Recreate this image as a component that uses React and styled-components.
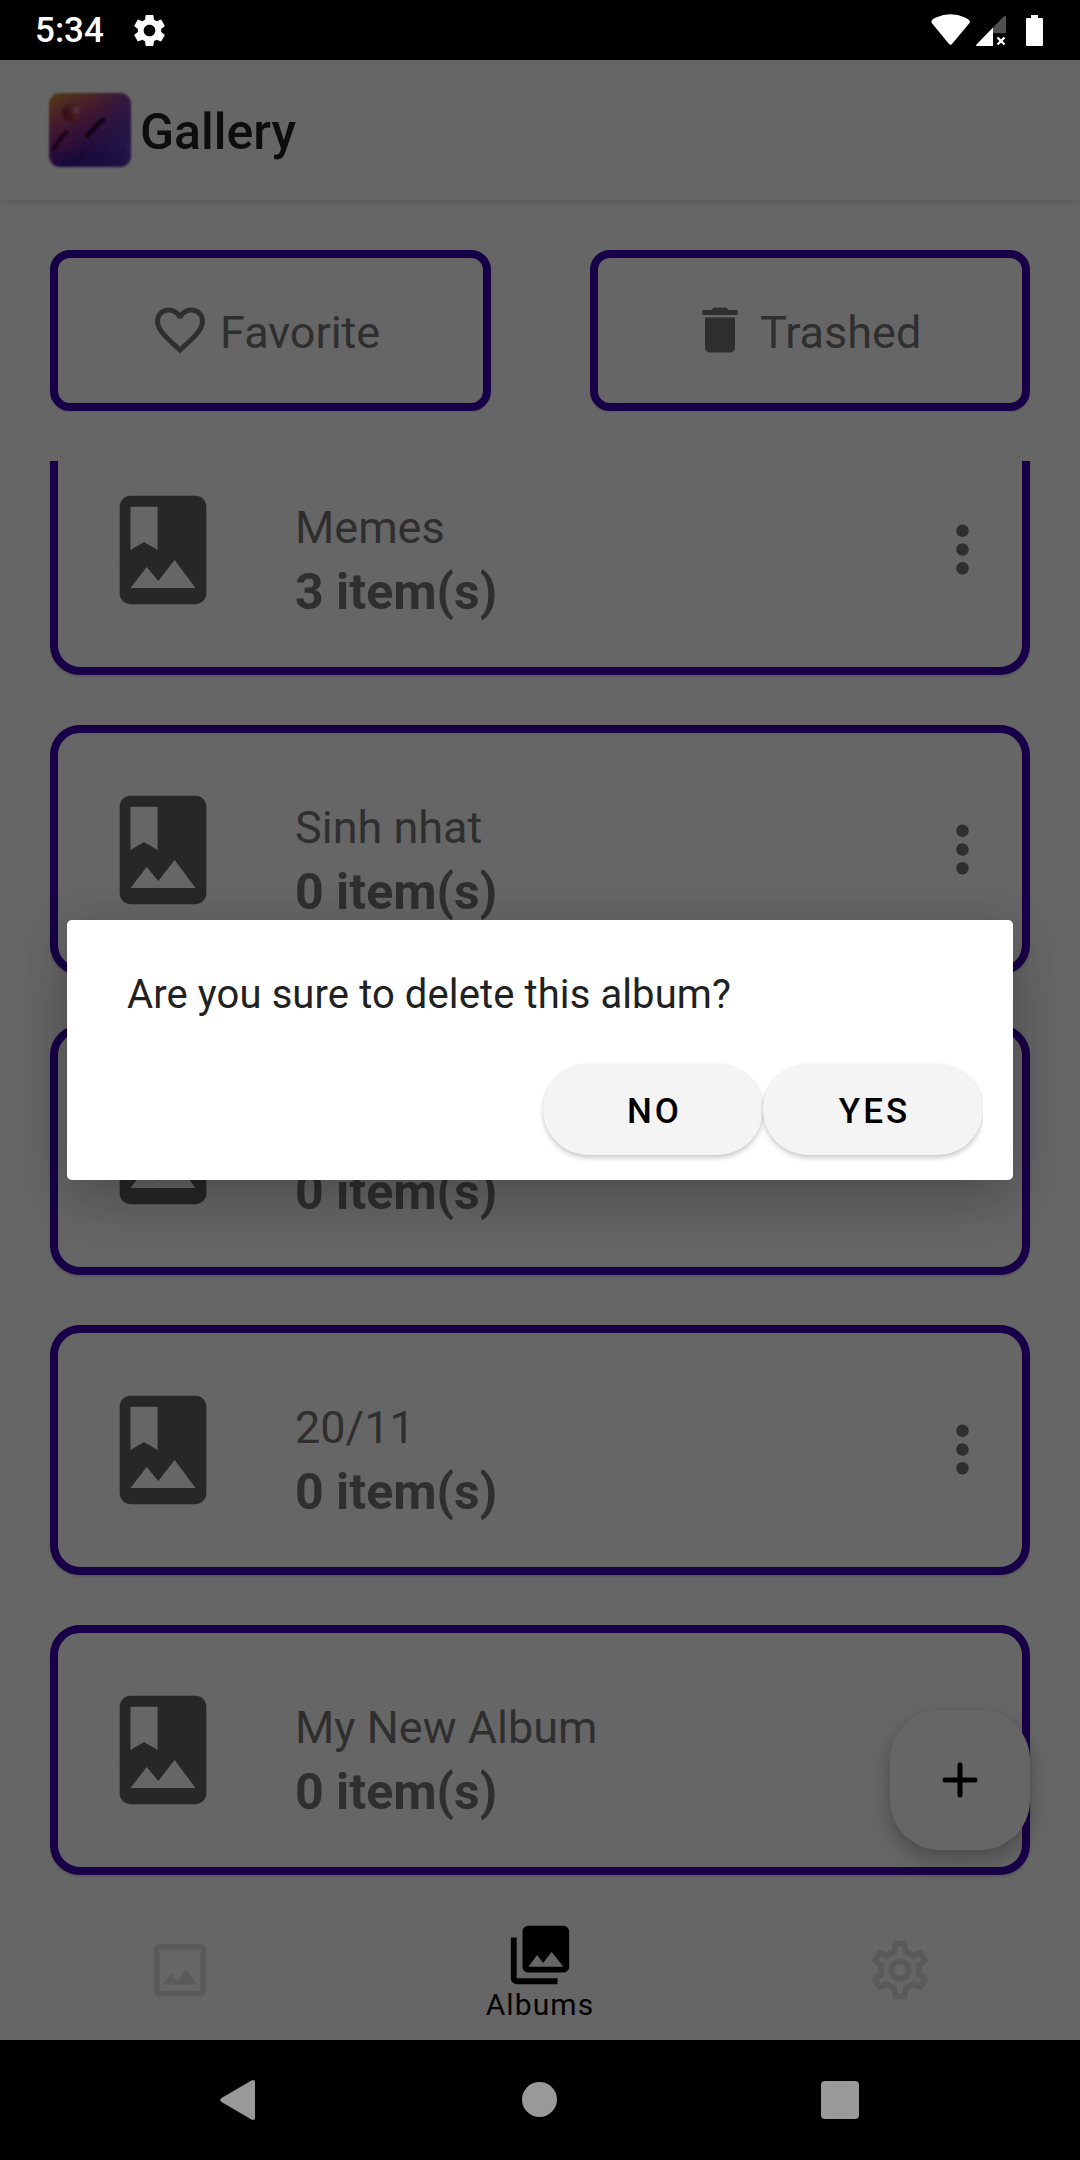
import React from "react";
import styled, { createGlobalStyle } from "styled-components";

const GlobalStyle = createGlobalStyle`
  * { box-sizing: border-box; }
  body { margin: 0; background: #000; font-family: Roboto, "Noto Sans", sans-serif; }
  svg { display: block; flex: none; }
`;

const Phone = styled.div`
  width: 1080px;
  height: 2160px;
  display: flex;
  flex-direction: column;
  background: #000;
  overflow: hidden;
`;

const StatusBar = styled.header`
  height: 60px;
  flex: none;
  display: flex;
  align-items: center;
  padding: 0 34px 0 35px;
  color: #fff;
`;

const Clock = styled.span`
  font-size: 35px;
  font-weight: 500;
  line-height: 58px;
  padding-top: 2px;
  width: 95px;
`;

const StatusIcons = styled.div`
  margin-left: auto;
  display: flex;
`;

const AppArea = styled.main`
  position: relative;
  height: 1980px;
  flex: none;
  display: flex;
  flex-direction: column;
  background: #fff;
`;

const AppBar = styled.div`
  height: 140px;
  flex: none;
  display: flex;
  align-items: center;
  padding: 0 45px;
  background: #fff;
  box-shadow: 0 2px 6px rgba(0, 0, 0, 0.14);
  z-index: 1;
`;

const Title = styled.h1`
  margin: 4px 0 0 5px;
  font-size: 50px;
  font-weight: 500;
  color: #212121;
`;

const Shortcuts = styled.div`
  flex: none;
  display: grid;
  grid-template-columns: 441px 440px;
  column-gap: 99px;
  padding: 50px 50px;
`;

const Shortcut = styled.button`
  height: 161px;
  display: flex;
  align-items: center;
  gap: 10px;
  padding: 0 0 0 92px;
  border: 8px solid #3d00b3;
  border-radius: 20px;
  background: #fff;
  color: #757575;
  font: 400 45px Roboto, sans-serif;
  box-shadow: 0 1px 2px rgba(0, 0, 0, 0.12);

  svg {
    margin-bottom: 1px;
  }
`;

const ShortcutLabel = styled.span`
  padding-top: 3px;
`;

const AlbumList = styled.div`
  flex: 1;
  min-height: 0;
  overflow: hidden;
  display: flex;
  flex-direction: column;
  justify-content: flex-end;
  gap: 50px;
  padding: 0 50px 25px;
`;

const AlbumCard = styled.article`
  height: 250px;
  flex: none;
  display: flex;
  align-items: center;
  padding: 0 22px 0 40px;
  border: 8px solid #3d00b3;
  border-radius: 30px;
  background: #fff;
  color: #757575;
  box-shadow: 0 2px 3px rgba(0, 0, 0, 0.14);
`;

const AlbumText = styled.div`
  flex: 1;
  padding: 22px 0 0 67px;
`;

const AlbumName = styled.div`
  height: 53px;
  font-size: 45px;
  line-height: 53px;
`;

const AlbumCount = styled.div`
  margin-top: 9px;
  font-size: 50px;
  line-height: 59px;
  font-weight: 700;
`;

const CardIcon = styled.span`
  color: #616161;
`;

const MenuIcon = styled.span`
  padding-bottom: 2px;
`;

const Fab = styled.button`
  position: absolute;
  right: 50px;
  bottom: 190px;
  width: 140px;
  height: 140px;
  display: grid;
  place-items: center;
  padding: 0;
  border: 0;
  border-radius: 50px;
  background: #fff;
  box-shadow: 0 10px 22px rgba(0, 0, 0, 0.26), 0 1px 8px rgba(0, 0, 0, 0.05);
`;

const TabBar = styled.nav`
  height: 140px;
  flex: none;
  display: grid;
  grid-template-columns: repeat(3, 1fr);
  background: #fff;
  box-shadow: 0 -1px 5px rgba(0, 0, 0, 0.04);
`;

const Tab = styled.div`
  display: flex;
  flex-direction: column;
  align-items: center;
  padding-top: ${(p) => (p.$active ? 20 : 35)}px;
  color: ${(p) => (p.$active ? "#000" : "#e0e0e0")};
`;

const TabLabel = styled.span`
  font-size: 30px;
  line-height: 36px;
  letter-spacing: 1.1px;
  margin-top: -3px;
`;

const Scrim = styled.div`
  position: absolute;
  inset: 0;
  z-index: 2;
  display: flex;
  flex-direction: column;
  align-items: center;
  padding-top: 860px;
  background: rgba(0, 0, 0, 0.6);
`;

const Dialog = styled.section`
  width: 946px;
  height: 260px;
  display: flex;
  flex-direction: column;
  justify-content: space-between;
  padding: 51px 30px 0 60px;
  border-radius: 5px;
  background: #fff;
  box-shadow: 0 22px 56px rgba(0, 0, 0, 0.2), 0 4px 50px rgba(0, 0, 0, 0.08);
`;

const Message = styled.p`
  margin: 0;
  font-size: 40px;
  line-height: 48px;
  letter-spacing: 0.1px;
  color: #212121;
`;

const Actions = styled.div`
  display: flex;
  justify-content: flex-end;
  padding: 10px 0 25px;
  overflow: hidden;
`;

const DialogButton = styled.button`
  width: 220px;
  height: 91px;
  padding: 3px 0 0 3px;
  border: 0;
  border-radius: 46px;
  background: #f4f4f4;
  color: #000;
  font: 500 35px Roboto, sans-serif;
  letter-spacing: 3.1px;
  box-shadow: 0 3px 5px rgba(0, 0, 0, 0.2), 0 0 2px rgba(0, 0, 0, 0.06);
`;

const SystemNav = styled.footer`
  height: 120px;
  flex: none;
  display: grid;
  grid-template-columns: repeat(3, 300px);
  justify-content: center;
  place-items: center;
  color: #999;
`;

const Icon = ({ size, d }) => (
  <svg width={size} height={size} viewBox="0 0 24 24" fill="currentColor">
    <path d={d} />
  </svg>
);

const paths = {
  settings:
    "M19.14 12.94c.04-.3.06-.61.06-.94 0-.32-.02-.64-.07-.94l2.03-1.58a.49.49 0 0 0 .12-.61l-1.92-3.32a.488.488 0 0 0-.59-.22l-2.39.96c-.5-.38-1.03-.7-1.62-.94l-.36-2.54a.484.484 0 0 0-.48-.41h-3.84c-.24 0-.43.17-.47.41l-.36 2.54c-.59.24-1.13.57-1.62.94l-2.39-.96c-.22-.08-.47 0-.59.22L2.74 8.87c-.12.21-.08.47.12.61l2.03 1.58c-.05.3-.09.63-.09.94s.02.64.07.94l-2.03 1.58a.49.49 0 0 0-.12.61l1.92 3.32c.12.22.37.29.59.22l2.39-.96c.5.38 1.03.7 1.62.94l.36 2.54c.05.24.24.41.48.41h3.84c.24 0 .44-.17.47-.41l.36-2.54c.59-.24 1.13-.56 1.62-.94l2.39.96c.22.08.47 0 .59-.22l1.92-3.32c.12-.22.07-.47-.12-.61l-2.01-1.58zM12 15.6c-1.98 0-3.6-1.62-3.6-3.6s1.62-3.6 3.6-3.6 3.6 1.62 3.6 3.6-1.62 3.6-3.6 3.6z",
  settingsOutline:
    "M19.43 12.98c.04-.32.07-.64.07-.98 0-.34-.03-.66-.07-.98l2.11-1.65c.19-.15.24-.42.12-.64l-2-3.46c-.09-.16-.26-.25-.44-.25-.06 0-.12.01-.17.03l-2.49 1c-.52-.4-1.08-.73-1.69-.98l-.38-2.65C14.46 2.18 14.25 2 14 2h-4c-.25 0-.46.18-.49.42l-.38 2.65c-.61.25-1.17.59-1.69.98l-2.49-1c-.06-.02-.12-.03-.18-.03-.17 0-.34.09-.43.25l-2 3.46c-.13.22-.07.49.12.64l2.11 1.65c-.04.32-.07.65-.07.98 0 .33.03.66.07.98l-2.11 1.65c-.19.15-.24.42-.12.64l2 3.46c.09.16.26.25.44.25.06 0 .12-.01.17-.03l2.49-1c.52.4 1.08.73 1.69.98l.38 2.65c.03.24.24.42.49.42h4c.25 0 .46-.18.49-.42l.38-2.65c.61-.25 1.17-.59 1.69-.98l2.49 1c.06.02.12.03.18.03.17 0 .34-.09.43-.25l2-3.46c.12-.22.07-.49-.12-.64l-2.11-1.65zm-1.98-1.71c.04.31.05.52.05.73 0 .21-.02.43-.05.73l-.14 1.13.89.7 1.08.84-.7 1.21-1.27-.51-1.04-.42-.9.68c-.43.32-.84.56-1.25.73l-1.06.43-.16 1.13-.2 1.35h-1.4l-.19-1.35-.16-1.13-1.06-.43c-.43-.18-.83-.41-1.23-.71l-.91-.7-1.06.43-1.27.51-.7-1.21 1.08-.84.89-.7-.14-1.13c-.03-.31-.05-.54-.05-.74s.02-.43.05-.73l.14-1.13-.89-.7-1.08-.84.7-1.21 1.27.51 1.04.42.9-.68c.43-.32.84-.56 1.25-.73l1.06-.43.16-1.13.2-1.35h1.39l.19 1.35.16 1.13 1.06.43c.43.18.83.41 1.23.71l.91.7 1.06-.43 1.27-.51.7 1.21-1.07.85-.89.7.14 1.13zM12 8c-2.21 0-4 1.79-4 4s1.79 4 4 4 4-1.79 4-4-1.79-4-4-4zm0 6c-1.1 0-2-.9-2-2s.9-2 2-2 2 .9 2 2-.9 2-2 2z",
  heart:
    "M16.5 3c-1.74 0-3.41.81-4.5 2.09C10.91 3.81 9.24 3 7.5 3 4.42 3 2 5.42 2 8.5c0 3.78 3.4 6.86 8.55 11.54L12 21.35l1.45-1.32C18.6 15.36 22 12.28 22 8.5 22 5.42 19.58 3 16.5 3zm-4.4 15.55l-.1.1-.1-.1C7.14 14.24 4 11.39 4 8.5 4 6.5 5.5 5 7.5 5c1.54 0 3.04.99 3.57 2.36h1.87C13.46 5.99 14.96 5 16.5 5c2 0 3.5 1.5 3.5 3.5 0 2.89-3.14 5.74-7.9 10.05z",
  trash:
    "M6 19c0 1.1.9 2 2 2h8c1.1 0 2-.9 2-2V7H6v12zM19 4h-3.5l-1-1h-5l-1 1H5v2h14V4z",
  album:
    "M18 2H6c-1.1 0-2 .9-2 2v16c0 1.1.9 2 2 2h12c1.1 0 2-.9 2-2V4c0-1.1-.9-2-2-2zM6 4h5v8l-2.5-1.5L6 12V4zm0 15l3-3.86 2.14 2.58 3-3.86L18 19H6z",
  more: "M12 8c1.1 0 2-.9 2-2s-.9-2-2-2-2 .9-2 2 .9 2 2 2zm0 2c-1.1 0-2 .9-2 2s.9 2 2 2 2-.9 2-2-.9-2-2-2zm0 6c-1.1 0-2 .9-2 2s.9 2 2 2 2-.9 2-2-.9-2-2-2z",
  photo:
    "M19 5v14H5V5h14m0-2H5c-1.1 0-2 .9-2 2v14c0 1.1.9 2 2 2h14c1.1 0 2-.9 2-2V5c0-1.1-.9-2-2-2zM14.14 11.86l-3 3.87L9 13.14 6 17h12l-3.86-5.14z",
  library:
    "M22 16V4c0-1.1-.9-2-2-2H8c-1.1 0-2 .9-2 2v12c0 1.1.9 2 2 2h12c1.1 0 2-.9 2-2zm-11-4l2.03 2.71L16 11l4 5H8l3-4zM2 6v14c0 1.1.9 2 2 2h14v-2H4V6H2z",
};

const Logo = () => (
  <svg width="90" height="90" viewBox="0 0 90 90">
    <defs>
      <linearGradient id="base" x1="0.1" y1="0" x2="0.65" y2="1">
        <stop offset="0" stopColor="#c88e38" />
        <stop offset="0.24" stopColor="#b64f62" />
        <stop offset="0.5" stopColor="#8a2c88" />
        <stop offset="0.8" stopColor="#451b96" />
        <stop offset="1" stopColor="#45269c" />
      </linearGradient>
      <linearGradient id="side" x1="0" y1="0.3" x2="1" y2="0.5">
        <stop offset="0.5" stopColor="#6545bd" stopOpacity="0" />
        <stop offset="1" stopColor="#6545bd" stopOpacity="0.7" />
      </linearGradient>
      <linearGradient id="sun" x1="0" y1="0.6" x2="1" y2="0.2">
        <stop offset="0" stopColor="#7c2030" />
        <stop offset="0.55" stopColor="#a83c54" />
        <stop offset="1" stopColor="#c0667c" />
      </linearGradient>
      <filter id="soft" x="-10%" y="-10%" width="120%" height="120%">
        <feGaussianBlur stdDeviation="1" />
      </filter>
    </defs>
    <g filter="url(#soft)">
      <rect x="4" y="8" width="82" height="74" rx="11" fill="url(#base)" />
      <rect x="4" y="8" width="82" height="74" rx="11" fill="url(#side)" />
      <path d="M8 67L70 67Q79 67 75 56L84 73Q80 81 68 81L16 81Q6 79 8 67z" fill="#32158a" opacity="0.35" />
      <circle cx="26" cy="28" r="9" fill="url(#sun)" />
      <circle cx="31" cy="25" r="3.5" fill="#d08c9c" opacity="0.6" />
      <path d="M8 66Q14 53 23 46" fill="none" stroke="#42083e" strokeWidth="5" />
      <path d="M41 52L55 37L60 34" fill="none" stroke="#22042f" strokeWidth="5" />
    </g>
  </svg>
);

const WifiSignalBattery = () => (
  <svg width="116" height="34" viewBox="930 12 116 34" fill="#fff">
    <path d="M931.3 20.5Q932 18 936 16.4Q950.5 10.3 965 16.4Q969.3 18.2 970 20.5L969.5 22L952 43Q950.5 44.500 949 43L931.8 22z" />
    <path d="M976.5 43.4L993 26.5V45H977Q975.2 45 976.5 43.4z" />
    <path d="M993 26.5L1004 15.3Q1006 14 1006 16V32.3H993z" fill="#505050" />
    <path d="M997.5 36.5L1004.5 43.5M1004.5 36.5L997.5 43.5" stroke="#fff" strokeWidth="2.4" />
    <path d="M1031 14h7v3h4q1 0 1 1v26q0 1-1 1h-15q-1 0-1-1v-26q0-1 1-1h4z" />
  </svg>
);

const PlusIcon = () => (
  <svg width="40" height="40" viewBox="0 0 40 40" stroke="#000" strokeWidth="5" strokeLinecap="round">
    <path d="M20 5v30M5 20h30" />
  </svg>
);

const albums = [
  { id: 1, name: "Memes", count: 3 },
  { id: 2, name: "Sinh nhat", count: 0 },
  { id: 3, name: "", count: 0 },
  { id: 4, name: "20/11", count: 0 },
  { id: 5, name: "My New Album", count: 0 },
];

function Album({ name, count }) {
  return (
    <AlbumCard>
      <CardIcon>
        <Icon size={130} d={paths.album} />
      </CardIcon>
      <AlbumText>
        <AlbumName>{name}</AlbumName>
        <AlbumCount>{count} item(s)</AlbumCount>
      </AlbumText>
      <MenuIcon>
        <Icon size={75} d={paths.more} />
      </MenuIcon>
    </AlbumCard>
  );
}

export default function App() {
  return (
    <Phone>
      <GlobalStyle />
      <StatusBar>
        <Clock>5:34</Clock>
        <Icon size={39} d={paths.settings} />
        <StatusIcons>
          <WifiSignalBattery />
        </StatusIcons>
      </StatusBar>

      <AppArea>
        <AppBar>
          <Logo />
          <Title>Gallery</Title>
        </AppBar>
        <Shortcuts>
          <Shortcut>
            <Icon size={60} d={paths.heart} />
            <ShortcutLabel>Favorite</ShortcutLabel>
          </Shortcut>
          <Shortcut>
            <Icon size={60} d={paths.trash} />
            <ShortcutLabel>Trashed</ShortcutLabel>
          </Shortcut>
        </Shortcuts>
        <AlbumList>
          {albums.map((a) => (
            <Album key={a.id} name={a.name} count={a.count} />
          ))}
        </AlbumList>
        <Fab>
          <PlusIcon />
        </Fab>
        <TabBar>
          <Tab>
            <Icon size={70} d={paths.photo} />
          </Tab>
          <Tab $active>
            <Icon size={70} d={paths.library} />
            <TabLabel>Albums</TabLabel>
          </Tab>
          <Tab>
            <Icon size={70} d={paths.settingsOutline} />
          </Tab>
        </TabBar>

        <Scrim>
          <Dialog>
            <Message>Are you sure to delete this album?</Message>
            <Actions>
              <DialogButton>NO</DialogButton>
              <DialogButton>YES</DialogButton>
            </Actions>
          </Dialog>
        </Scrim>
      </AppArea>

      <SystemNav>
        <svg width="40" height="44" viewBox="0 0 40 44" fill="currentColor">
          <path d="M1.5 20L31.5 2.4Q35 1 35 4V40Q35 43 31.5 41.6L1.5 24Q-1 22 1.5 20z" />
        </svg>
        <svg width="36" height="36" viewBox="0 0 36 36" fill="currentColor">
          <circle cx="17.5" cy="17.5" r="17.5" />
        </svg>
        <svg width="38" height="38" viewBox="0 0 38 38" fill="currentColor">
          <rect width="38" height="38" rx="4" />
        </svg>
      </SystemNav>
    </Phone>
  );
}
